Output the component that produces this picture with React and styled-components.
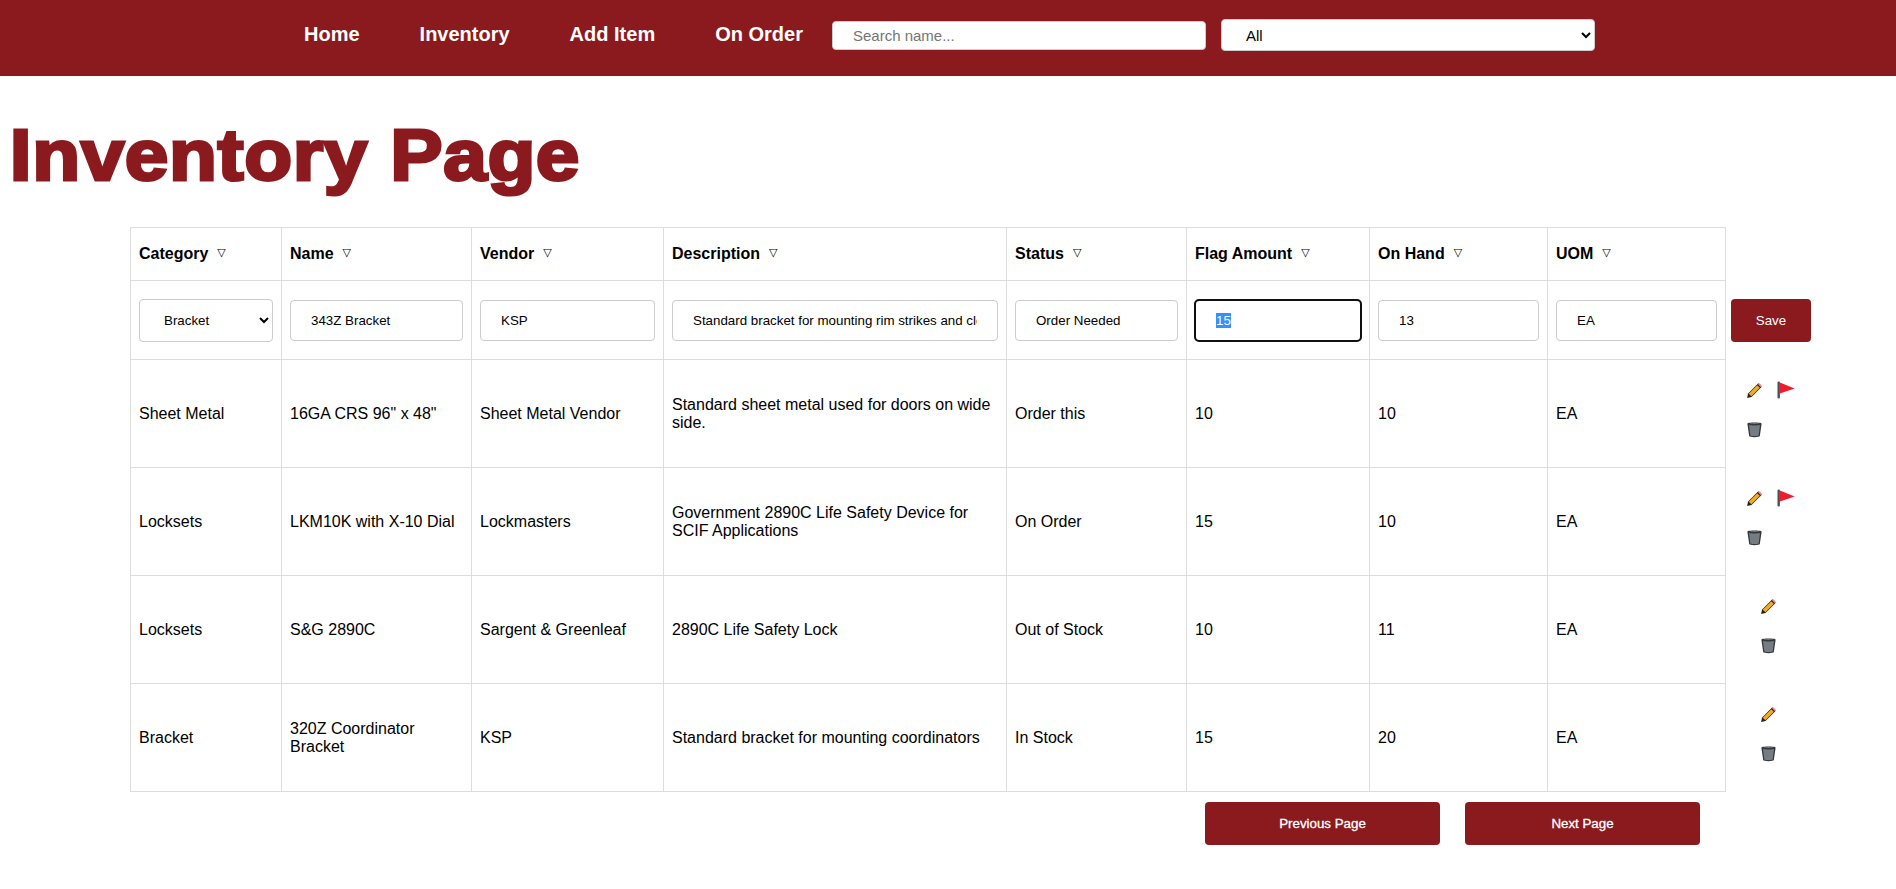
import React, { useEffect, useRef } from 'react'
import styled, { createGlobalStyle } from 'styled-components'

const RED = '#8b1a1e'

const columns = [
  { label: 'Category', width: 151 },
  { label: 'Name', width: 190 },
  { label: 'Vendor', width: 192 },
  { label: 'Description', width: 343 },
  { label: 'Status', width: 180 },
  { label: 'Flag Amount', width: 183 },
  { label: 'On Hand', width: 178 },
  { label: 'UOM', width: 178 },
]

const rows = [
  { category: 'Sheet Metal', name: '16GA CRS 96" x 48"', vendor: 'Sheet Metal Vendor', description: 'Standard sheet metal used for doors on wide side.', status: 'Order this', flag: 10, hand: 10, uom: 'EA', flagged: true },
  { category: 'Locksets', name: 'LKM10K with X-10 Dial', vendor: 'Lockmasters', description: 'Government 2890C Life Safety Device for SCIF Applications', status: 'On Order', flag: 15, hand: 10, uom: 'EA', flagged: true },
  { category: 'Locksets', name: 'S&G 2890C', vendor: 'Sargent & Greenleaf', description: '2890C Life Safety Lock', status: 'Out of Stock', flag: 10, hand: 11, uom: 'EA', flagged: false },
  { category: 'Bracket', name: '320Z Coordinator Bracket', vendor: 'KSP', description: 'Standard bracket for mounting coordinators', status: 'In Stock', flag: 15, hand: 20, uom: 'EA', flagged: false },
]

function PencilIcon() {
  return (
    <svg width="17" height="17" viewBox="0 0 16 16">
      <path d="M1 15l1-4.2L11.6 1.2l3.2 3.2L5.2 14z" fill="#222" />
      <path d="M2.6 11l8-8 2.4 2.4-8 8z" fill="#f4ab1c" />
      <path d="M11.3 2.2l.7-.6c.4-.3.9-.3 1.2 0l1.2 1.2c.3.3.3.8 0 1.2l-.7.7z" fill="#ef8a94" />
    </svg>
  )
}

function FlagIcon() {
  return (
    <svg width="18" height="18" viewBox="0 0 18 18">
      <rect x="0.5" y="0.5" width="2.4" height="17" rx="1" fill="#4a4f54" />
      <path d="M2.9 1.6L17.6 7.4 2.9 12.6z" fill="#ee1c2e" />
    </svg>
  )
}

function TrashIcon() {
  return (
    <svg width="17" height="17" viewBox="0 0 16 16">
      <path d="M1.4 2.4C1.4 1.2 14.6 1.2 14.6 2.4L14.6 3.4 13 14.2C12.8 15.6 3.2 15.6 3 14.2L1.4 3.4z" fill="#33383c" />
      <path d="M2.8 3.8C5.5 4.4 10.5 4.4 13.2 3.8L11.9 13.6C10 14.3 6 14.3 4.1 13.6z" fill="#767c82" />
      <path d="M3 2.4C5.5 2 10.5 2 13 2.4 10.5 2.9 5.5 2.9 3 2.4z" fill="#8d9399" />
    </svg>
  )
}

export default function App() {
  const flagInput = useRef(null)

  // the flag amount field is being edited in the screenshot
  useEffect(() => {
    flagInput.current.focus()
    flagInput.current.select()
  }, [])

  return (
    <>
      <GlobalStyle />
      <Header>
        <NavLink href="#">Home</NavLink>
        <NavLink href="#">Inventory</NavLink>
        <NavLink href="#">Add Item</NavLink>
        <NavLink href="#">On Order</NavLink>
        <SearchInput placeholder="Search name..." />
        <SearchSelect defaultValue="All">
          <option>All</option>
          <option>Bracket</option>
          <option>Locksets</option>
          <option>Sheet Metal</option>
        </SearchSelect>
      </Header>
      <Title>Inventory Page</Title>
      <Table>
        <colgroup>
          {columns.map((c) => (
            <Col key={c.label} $width={c.width} />
          ))}
          <Col $width={90} />
        </colgroup>
        <thead>
          <tr>
            {columns.map((c) => (
              <HeadCell key={c.label}>
                {c.label}
                <SortMark>▽</SortMark>
              </HeadCell>
            ))}
          </tr>
        </thead>
        <tbody>
          <tr>
            <EditCell>
              <CategorySelect defaultValue="Bracket">
                <option>Bracket</option>
                <option>Locksets</option>
                <option>Sheet Metal</option>
              </CategorySelect>
            </EditCell>
            <EditCell><EditInput defaultValue="343Z Bracket" /></EditCell>
            <EditCell><EditInput defaultValue="KSP" /></EditCell>
            <EditCell><EditInput defaultValue="Standard bracket for mounting rim strikes and closers" /></EditCell>
            <EditCell><EditInput defaultValue="Order Needed" /></EditCell>
            <EditCell><EditInput ref={flagInput} defaultValue="15" /></EditCell>
            <EditCell><EditInput defaultValue="13" /></EditCell>
            <EditCell><EditInput defaultValue="EA" /></EditCell>
            <ActionCell><SaveButton>Save</SaveButton></ActionCell>
          </tr>
          {rows.map((r) => (
            <tr key={r.name}>
              <DataCell>{r.category}</DataCell>
              <DataCell>{r.name}</DataCell>
              <DataCell>{r.vendor}</DataCell>
              <DataCell>{r.description}</DataCell>
              <DataCell>{r.status}</DataCell>
              <DataCell>{r.flag}</DataCell>
              <DataCell>{r.hand}</DataCell>
              <DataCell>{r.uom}</DataCell>
              <ActionCell>
                <Actions $cols={r.flagged ? 2 : 1}>
                  <IconButton aria-label="Edit"><PencilIcon /></IconButton>
                  {r.flagged && <IconButton aria-label="Flag"><FlagIcon /></IconButton>}
                  <IconButton aria-label="Delete"><TrashIcon /></IconButton>
                </Actions>
              </ActionCell>
            </tr>
          ))}
        </tbody>
      </Table>
      <Pager>
        <PageButton>Previous Page</PageButton>
        <PageButton>Next Page</PageButton>
      </Pager>
    </>
  )
}

const GlobalStyle = createGlobalStyle`
body{
    margin: 0;
    background: white;
    color: black;
    font-family: "Liberation Sans", Arial, sans-serif;
}
`

const Header = styled.header`
height: 76px;
background-color: ${RED};
display: flex;
align-items: center;
padding: 0 0 6px 274px;
box-sizing: border-box;
`

const NavLink = styled.a`
color: white;
font-size: 20px;
font-weight: bold;
text-decoration: none;
padding: 0 30px 2px;
`

const SearchInput = styled.input`
width: 374px;
height: 29px;
margin-left: -1px;
box-sizing: border-box;
border: 1px solid #ccc;
border-radius: 4px;
padding: 0 20px;
font-family: inherit;
font-size: 15px;
background: white;
`

const SearchSelect = styled.select`
width: 374px;
height: 32px;
margin-left: 15px;
box-sizing: border-box;
border: 1px solid #ccc;
border-radius: 4px;
padding: 0 20px;
font-family: inherit;
font-size: 15px;
background: white;
color: black;
`

// no black weight installed: widened and stroked bold stands in for it
const Title = styled.h1`
width: fit-content;
margin: 0;
padding: 0 0 0 9px;
height: 151px;
line-height: 158px;
color: ${RED};
font-size: 72px;
font-weight: bold;
letter-spacing: 0.5px;
-webkit-text-stroke: 3px ${RED};
transform: scaleX(1.09);
transform-origin: left center;
`

const Table = styled.table`
margin-left: 130px;
border-collapse: collapse;
table-layout: fixed;
width: 1685px;
font-size: 16px;
`

const Col = styled.col`
width: ${(p) => p.$width}px;
`

const HeadCell = styled.th`
height: 53px;
padding: 0 8px;
border: 1px solid #ddd;
text-align: left;
box-sizing: border-box;
`

const SortMark = styled.span`
margin-left: 9px;
font-family: "DejaVu Sans", sans-serif;
font-size: 11px;
font-weight: normal;
vertical-align: 3px;
`

const EditCell = styled.td`
height: 79px;
padding: 0 8px;
border: 1px solid #ddd;
box-sizing: border-box;
`

const EditInput = styled.input`
display: block;
width: 100%;
height: 41px;
box-sizing: border-box;
border: 1px solid #ccc;
border-radius: 4px;
padding: 0 20px;
font-family: inherit;
font-size: 13.333px;
color: black;
&:focus{
    outline: 2px solid #101010;
    outline-offset: -1px;
}
&::selection{
    background: #3390ff;
    color: white;
}
`

const CategorySelect = styled.select`
display: block;
width: 100%;
height: 43px;
box-sizing: border-box;
border: 1px solid #ccc;
border-radius: 4px;
padding: 0 0 0 20px;
font-family: inherit;
font-size: 13.333px;
background: white;
color: black;
`

const DataCell = styled.td`
height: 108px;
padding: 0 8px;
border: 1px solid #ddd;
box-sizing: border-box;
line-height: 18px;
`

const ActionCell = styled.td`
padding: 0 0 0 5px;
box-sizing: border-box;
`

const SaveButton = styled.button`
display: block;
width: 80px;
height: 43px;
border: none;
border-radius: 4px;
background-color: ${RED};
color: white;
font-family: inherit;
font-size: 13.333px;
`

const Actions = styled.div`
display: grid;
grid-template-columns: repeat(${(p) => p.$cols}, 32px);
grid-auto-rows: 39px;
justify-content: center;
width: ${(p) => (p.$cols === 1 ? 74 : 78)}px;
`

const IconButton = styled.button`
display: flex;
align-items: center;
justify-content: center;
border: none;
padding: 0 0 8px;
background: transparent;
`

const Pager = styled.div`
display: flex;
gap: 25px;
margin: 10px 0 0 1205px;
`

const PageButton = styled.button`
width: 235px;
height: 43px;
border: none;
border-radius: 4px;
background-color: ${RED};
color: white;
font-family: inherit;
font-size: 13.333px;
-webkit-text-stroke: 0.3px white;
`
